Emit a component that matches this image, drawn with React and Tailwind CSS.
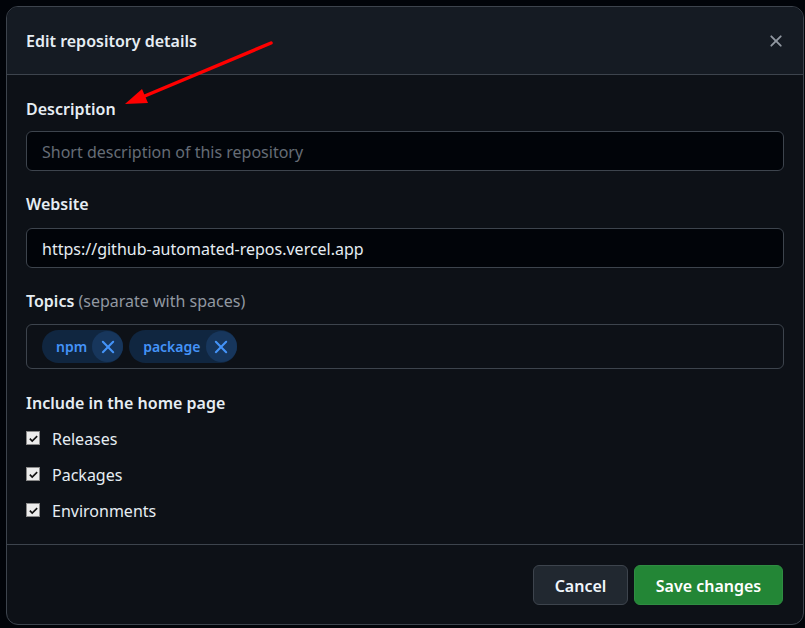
import React from 'react';

const font = { fontFamily: '"Noto Sans", "Open Sans", Arial, sans-serif' };

const XIcon = ({ size, color }) => (
  <svg width={size} height={size} viewBox="0 0 16 16" fill={color || 'currentColor'}>
    <path d="M3.72 3.72a.75.75 0 0 1 1.06 0L8 6.94l3.22-3.22a.749.749 0 0 1 1.275.326.749.749 0 0 1-.215.734L9.06 8l3.22 3.22a.749.749 0 0 1-.326 1.275.749.749 0 0 1-.734-.215L8 9.06l-3.22 3.22a.751.751 0 0 1-1.042-.018.751.751 0 0 1-.018-1.042L6.94 8 3.72 4.78a.75.75 0 0 1 0-1.06Z" />
  </svg>
);

const Chip = ({ label }) => (
  <span className="flex h-[33px] items-center rounded-full bg-[#102640] pl-[14px] text-[14px] font-semibold text-[#4493f8]">
    <span className="mr-[5px] leading-none">{label}</span>
    <span className="flex h-[31px] w-[31px] items-center justify-center rounded-full bg-[#17365c]">
      <XIcon size={22} />
    </span>
  </span>
);

const Check = ({ label }) => (
  <label className="flex h-[24px] items-center">
    <span className="flex h-[14px] w-[14px] items-center justify-center border border-[#8a8a8a] bg-[#ececec]">
      <svg width="11" height="11" viewBox="0 0 12 12" fill="none" stroke="#111" strokeWidth="1.8">
        <path d="M2 6.2l2.6 2.6L10 3.4" />
      </svg>
    </span>
    <span className="ml-[12px] pt-[2px] text-[16px] text-[#e6edf3]">{label}</span>
  </label>
);

export default function App() {
  return (
    <div className="relative h-[628px] w-[805px] overflow-hidden bg-[#010409] pl-[6px] pt-[6px]" style={font}>
      <div className="flex h-[619px] w-[798px] flex-col overflow-hidden rounded-xl border border-[#3d444d] bg-[#0d1117]">
        <div className="flex h-[68px] shrink-0 items-center justify-between border-b border-[#3d444d] bg-[#151b23] pl-[19px] pr-[17px]">
          <h1 className="pt-[1px] text-[16px] font-semibold text-[#e6edf3]">Edit repository details</h1>
          <XIcon size={20} color="#9198a1" />
        </div>

        <div className="flex flex-1 flex-col px-[19px] pt-[22px]">
          <div className="text-[16px] font-semibold leading-[24px] text-[#e6edf3]">Description</div>
          <input
            placeholder="Short description of this repository"
            className="mt-[10px] h-[40px] w-full rounded-md border border-[#3d444d] bg-[#010409] px-[15px] pt-[2px] text-[16px] text-[#e6edf3] outline-none placeholder:text-[#656c76]"
          />

          <div className="mt-[21px] text-[16px] font-semibold leading-[24px] text-[#e6edf3]">Website</div>
          <input
            defaultValue="https://github-automated-repos.vercel.app"
            className="mt-[12px] h-[40px] w-full rounded-md border border-[#3d444d] bg-[#010409] px-[15px] pt-[2px] text-[16px] text-[#e6edf3] outline-none"
          />

          <div className="mt-[21px] text-[16px] leading-[24px] text-[#e6edf3]">
            <span className="font-semibold">Topics</span>{' '}
            <span className="text-[#9198a1]">(separate with spaces)</span>
          </div>
          <div className="mt-[11px] flex h-[45px] items-center gap-[6px] rounded-md border border-[#3d444d] px-[15px]">
            <Chip label="npm" />
            <Chip label="package" />
          </div>

          <div className="mt-[22px] text-[16px] font-semibold leading-[24px] text-[#e6edf3]">Include in the home page</div>
          <div className="mt-[11px] flex flex-col gap-[12px]">
            <Check label="Releases" />
            <Check label="Packages" />
            <Check label="Environments" />
          </div>
        </div>

        <div className="flex h-[80px] shrink-0 items-center justify-end gap-[6px] border-t border-[#3d444d] px-[20px]">
          <button className="h-[40px] w-[95px] rounded-md border border-[#3d444d] bg-[#212830] pt-[2px] text-[16px] font-semibold text-[#f0f6fc]">
            Cancel
          </button>
          <button className="h-[40px] w-[149px] rounded-md border border-[#2f8d42] bg-[#238636] pt-[2px] text-[16px] font-semibold text-white">
            Save changes
          </button>
        </div>
      </div>

      <svg className="pointer-events-none absolute left-0 top-0" width="805" height="628">
        <line x1="271" y1="43" x2="140" y2="98" stroke="#ff0000" strokeWidth="3.5" strokeLinecap="round" />
        <polygon points="125,104 142,89 148,103" fill="#ff0000" />
      </svg>
    </div>
  );
}
